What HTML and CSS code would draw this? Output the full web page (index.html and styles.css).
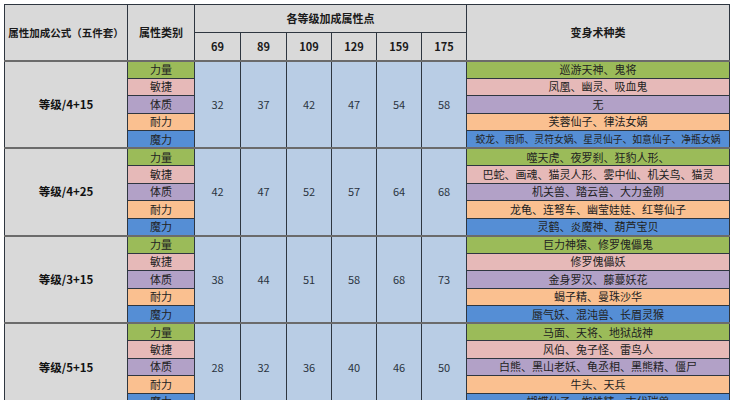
FILE: index.html
```html
<!DOCTYPE html>
<html lang="zh">
<head>
<meta charset="utf-8">
<link rel="stylesheet" href="styles.css">
</head>
<body>
<div class="page">
<table class="sheet">
  <colgroup>
    <col class="c-formula"><col class="c-cat">
    <col class="c-num"><col class="c-num"><col class="c-num2"><col class="c-num2"><col class="c-num2"><col class="c-num2">
    <col class="c-kind">
  </colgroup>
  <thead>
    <tr class="h1">
      <th rowspan="2" class="first">属性加成公式（五件套）</th>
      <th rowspan="2">属性类别</th>
      <th colspan="6">各等级加成属性点</th>
      <th rowspan="2">变身术种类</th>
    </tr>
    <tr class="h2">
      <th class="lv">69</th><th class="lv">89</th><th class="lv">109</th><th class="lv">129</th><th class="lv">159</th><th class="lv">175</th>
    </tr>
  </thead>
  <tbody>
    <tr>
      <td rowspan="5" class="formula">等级/4+15</td>
      <td class="g">力量</td>
      <td rowspan="5" class="num">32</td><td rowspan="5" class="num">37</td><td rowspan="5" class="num">42</td><td rowspan="5" class="num">47</td><td rowspan="5" class="num">54</td><td rowspan="5" class="num">58</td>
      <td class="g">巡游天神、鬼将</td>
    </tr>
    <tr><td class="p">敏捷</td><td class="p">凤凰、幽灵、吸血鬼</td></tr>
    <tr><td class="v">体质</td><td class="v">无</td></tr>
    <tr><td class="o">耐力</td><td class="o">芙蓉仙子、律法女娲</td></tr>
    <tr><td class="b">魔力</td><td class="b tight">蛟龙、雨师、灵符女娲、星灵仙子、如意仙子、净瓶女娲</td></tr>
  </tbody>
  <tbody>
    <tr>
      <td rowspan="5" class="formula">等级/4+25</td>
      <td class="g">力量</td>
      <td rowspan="5" class="num">42</td><td rowspan="5" class="num">47</td><td rowspan="5" class="num">52</td><td rowspan="5" class="num">57</td><td rowspan="5" class="num">64</td><td rowspan="5" class="num">68</td>
      <td class="g">噬天虎、夜罗刹、狂豹人形、</td>
    </tr>
    <tr><td class="p">敏捷</td><td class="p">巴蛇、画魂、猫灵人形、雾中仙、机关鸟、猫灵</td></tr>
    <tr><td class="v">体质</td><td class="v">机关兽、踏云兽、大力金刚</td></tr>
    <tr><td class="o">耐力</td><td class="o">龙龟、连弩车、幽莹娃娃、红萼仙子</td></tr>
    <tr><td class="b">魔力</td><td class="b">灵鹤、炎魔神、葫芦宝贝</td></tr>
  </tbody>
  <tbody>
    <tr>
      <td rowspan="5" class="formula">等级/3+15</td>
      <td class="g">力量</td>
      <td rowspan="5" class="num">38</td><td rowspan="5" class="num">44</td><td rowspan="5" class="num">51</td><td rowspan="5" class="num">58</td><td rowspan="5" class="num">68</td><td rowspan="5" class="num">73</td>
      <td class="g">巨力神猿、修罗傀儡鬼</td>
    </tr>
    <tr><td class="p">敏捷</td><td class="p">修罗傀儡妖</td></tr>
    <tr><td class="v">体质</td><td class="v">金身罗汉、藤蔓妖花</td></tr>
    <tr><td class="o">耐力</td><td class="o">蝎子精、曼珠沙华</td></tr>
    <tr><td class="b">魔力</td><td class="b">蜃气妖、混沌兽、长眉灵猴</td></tr>
  </tbody>
  <tbody>
    <tr>
      <td rowspan="5" class="formula">等级/5+15</td>
      <td class="g">力量</td>
      <td rowspan="5" class="num">28</td><td rowspan="5" class="num">32</td><td rowspan="5" class="num">36</td><td rowspan="5" class="num">40</td><td rowspan="5" class="num">46</td><td rowspan="5" class="num">50</td>
      <td class="g">马面、天将、地狱战神</td>
    </tr>
    <tr><td class="p">敏捷</td><td class="p">风伯、兔子怪、雷鸟人</td></tr>
    <tr><td class="v">体质</td><td class="v">白熊、黑山老妖、龟丞相、黑熊精、僵尸</td></tr>
    <tr><td class="o">耐力</td><td class="o">牛头、天兵</td></tr>
    <tr><td class="b">魔力</td><td class="b">蝴蝶仙子、蜘蛛精、古代瑞兽</td></tr>
  </tbody>
</table>
</div>
</body>
</html>
```

FILE: styles.css
```css
html, body {
  margin: 0;
  padding: 0;
  background: #ffffff;
  overflow: hidden;
}
.page {
  width: 734px;
  height: 400px;
  overflow: hidden;
  padding: 4px 0 0 4px;
  box-sizing: border-box;
}
.sheet {
  border-collapse: collapse;
  table-layout: fixed;
  width: 725px;
  font-family: "Noto Sans CJK SC", "Noto Sans", sans-serif;
  font-size: 11px;
  color: #222222;
}
.c-formula { width: 123px; }
.c-cat { width: 67px; }
.c-num { width: 46px; }
.c-num2 { width: 45px; }
.c-kind { width: 263px; }

.sheet th, .sheet td {
  border: 1px solid #2e3640;
  padding: 0;
  text-align: center;
  vertical-align: middle;
  white-space: nowrap;
  overflow: hidden;
  line-height: 13px;
}
.sheet th {
  background: #d9d9d9;
  font-weight: bold;
  font-size: 11px;
  color: #1a1a1a;
}
.sheet th.first { font-size: 10.5px; }
.sheet th.lv { font-size: 11px; }
.h1 { height: 28px; }
.h2 { height: 28px; }
.sheet thead { border-bottom: 2px solid #6b6b6b; }
.sheet tbody { border-top: 2px solid #6b6b6b; }
.sheet tbody tr { height: 17.5px; }

.formula {
  background: #d9d9d9;
  font-weight: bold;
  font-size: 11.5px;
  color: #111111;
}
.num {
  background: #b9cde5;
  color: #2a3340;
  font-size: 11px;
}
.tight { font-size: 9.8px; }
.g { background: #9bbb59; }
.p { background: #e6b9b8; }
.v { background: #b2a1c7; }
.o { background: #fac090; }
.b { background: #558ed5; }
```
